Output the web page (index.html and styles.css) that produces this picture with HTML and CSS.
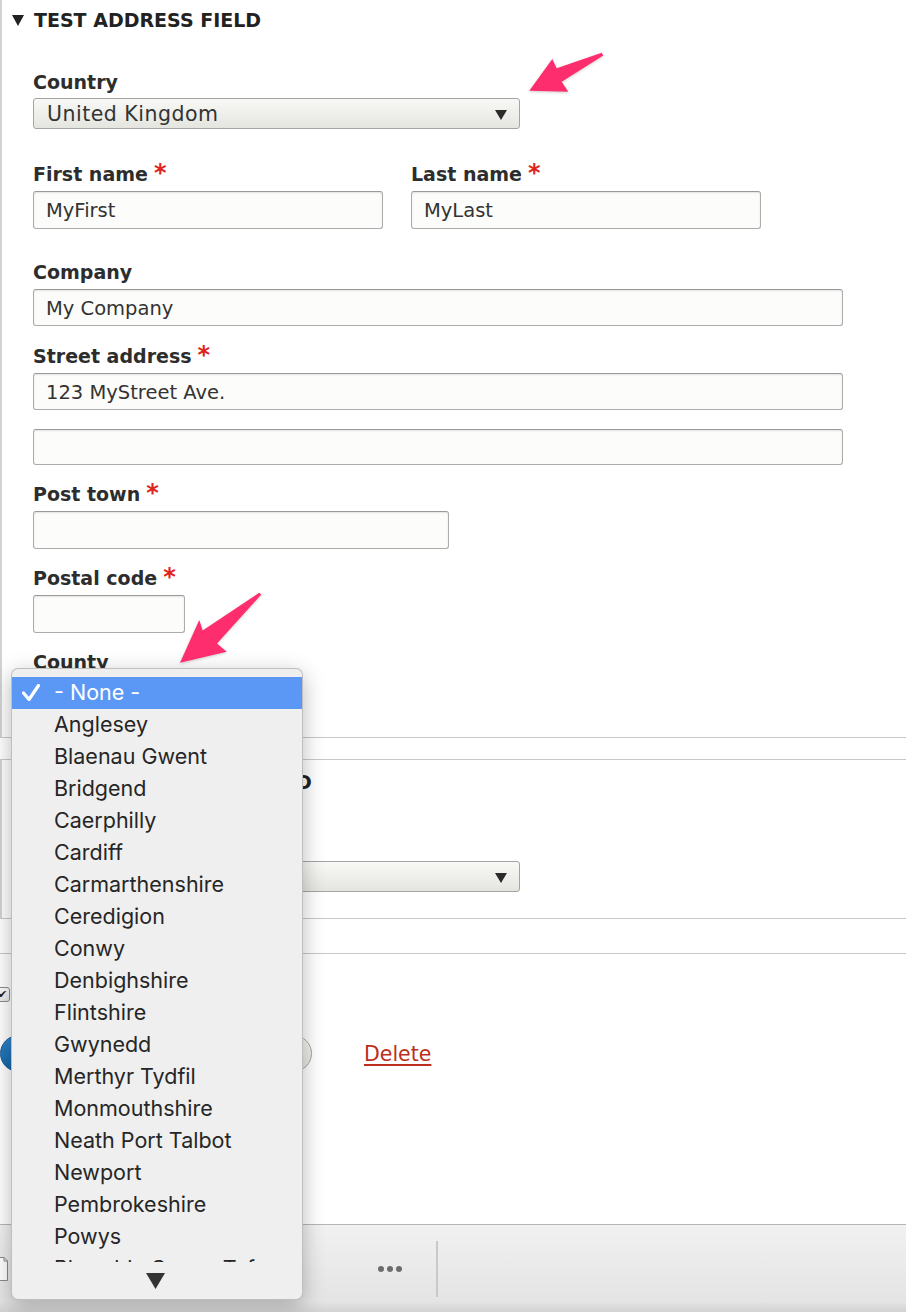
FILE: index.html
```html
<!DOCTYPE html>
<html lang="en">
<head>
<meta charset="utf-8">
<title>Test address field</title>
<link rel="stylesheet" href="styles.css">
</head>
<body>
<section class="details">
  <div class="summary">
    <svg class="summary-icon" width="12" height="11" viewBox="0 0 12 11"><polygon points="0,0 12,0 6,11" fill="#222"/></svg>
    <span>TEST ADDRESS FIELD</span>
  </div>

  <div class="field field--country">
    <div class="label">Country</div>
    <div class="select select--wide select--lift"><span>United Kingdom</span><i class="caret"></i></div>
  </div>

  <div class="row">
    <div class="field field--inrow">
      <div class="label">First name<span class="req">*</span></div>
      <input class="text w-name" type="text" value="MyFirst">
    </div>
    <div class="field field--inrow">
      <div class="label">Last name<span class="req">*</span></div>
      <input class="text w-name" type="text" value="MyLast">
    </div>
  </div>

  <div class="field field--company">
    <div class="label">Company</div>
    <input class="text text--short w-full" type="text" value="My Company">
  </div>

  <div class="field field--street">
    <div class="label">Street address<span class="req">*</span></div>
    <input class="text text--short w-full" type="text" value="123 MyStreet Ave.">
    <input class="text text--line2 w-full" type="text" value="">
  </div>

  <div class="field">
    <div class="label">Post town<span class="req">*</span></div>
    <input class="text w-town" type="text" value="">
  </div>

  <div class="field">
    <div class="label">Postal code<span class="req">*</span></div>
    <input class="text w-postal" type="text" value="">
  </div>

  <div class="field">
    <div class="label">County</div>
    <div class="select select--county"><span>- None -</span><i class="caret"></i></div>
  </div>
</section>

<section class="details details--second">
  <div class="summary">
    <svg class="summary-icon" width="12" height="11" viewBox="0 0 12 11"><polygon points="0,0 12,0 6,11" fill="#222"/></svg>
    <span>ANOTHER ADDRESS FIELD</span>
  </div>
  <div class="field field--country2">
    <div class="label">Country</div>
    <div class="select select--wide"><span>- None -</span><i class="caret"></i></div>
  </div>
</section>

<div class="meta">
  <div class="check-row"><span class="checkbox">✔</span><span class="check-label">Published</span></div>
  <div class="actions">
    <span class="btn btn--primary">Save</span>
    <span class="btn btn--secondary">Preview</span>
    <a class="delete" href="#">Delete</a>
  </div>
</div>

<footer class="footer">
  <svg class="doc" width="13" height="26" viewBox="0 0 13 26"><path d="M1.5 1.5 H8 L11.5 5 V24.5 H1.5 Z" fill="#fff" stroke="#8a8a8a" stroke-width="1"/><path d="M8 1.5 V5 H11.5" fill="none" stroke="#8a8a8a" stroke-width="1"/></svg>
  <div class="dots"><i></i><i></i><i></i></div>
  <div class="divider"></div>
</footer>

<div class="popup">
  <ul class="popup-list">
    <li class="is-selected"><svg class="check" width="18" height="17" viewBox="0 0 18 17"><path d="M1.5 9 L7 15.5 L16.5 1.5" fill="none" stroke="#fff" stroke-width="3.2" stroke-linecap="round" stroke-linejoin="round"/></svg>- None -</li>
    <li>Anglesey</li>
    <li>Blaenau Gwent</li>
    <li>Bridgend</li>
    <li>Caerphilly</li>
    <li>Cardiff</li>
    <li>Carmarthenshire</li>
    <li>Ceredigion</li>
    <li>Conwy</li>
    <li>Denbighshire</li>
    <li>Flintshire</li>
    <li>Gwynedd</li>
    <li>Merthyr Tydfil</li>
    <li>Monmouthshire</li>
    <li>Neath Port Talbot</li>
    <li>Newport</li>
    <li>Pembrokeshire</li>
    <li>Powys</li>
    <li>Rhondda Cynon Taf</li>
    <li>Swansea</li>
  </ul>
  <div class="popup-scroll">
    <svg width="19" height="16" viewBox="0 0 19 16"><polygon points="0,0 19,0 9.5,16" fill="#333"/></svg>
  </div>
</div>

<svg class="annotations" width="906" height="1312" viewBox="0 0 906 1312">
  <polygon points="529.3,90.7 552.3,59 556.7,68.3 601.7,52.7 603.3,55.5 561.7,81.7 568.3,91.7" fill="#fe2d6e"/>
  <polygon points="180,662.7 199.3,620 202.7,630.5 259.3,592.7 261.3,594.5 217,643.5 226.7,651.7" fill="#fe2d6e"/>
</svg>
</body>
</html>
```

FILE: styles.css
```css
* {
  box-sizing: border-box;
}

html,
body {
  margin: 0;
  padding: 0;
}

body {
  width: 906px;
  height: 1312px;
  overflow: hidden;
  position: relative;
  background: #fff;
  font-family: "DejaVu Sans", sans-serif;
  color: #333;
  display: flex;
  flex-direction: column;
}

/* ---------- details / fieldsets ---------- */
.details {
  border-left: 2px solid #d2d2d2;
  border-bottom: 1px solid #c8c8c8;
  padding: 0 0 27px 31px;
}

.details--second {
  border-top: 1px solid #c8c8c8;
  margin-top: 21px;
  padding-bottom: 26px;
}

.summary {
  height: 40px;
  margin-left: -21px;
  display: flex;
  align-items: center;
  gap: 10px;
  font-weight: bold;
  font-size: 19px;
  color: #222;
}

.details--second .summary {
  height: 44px;
}

.summary-icon {
  flex: none;
}

/* ---------- fields ---------- */
.field {
  margin-top: 18px;
}

.field--country {
  margin-top: 31px;
}

.field--country2 {
  margin-top: 29px;
}

.field--inrow {
  margin-top: 0;
}

.field--company {
  margin-top: 32px;
}

.field--street {
  margin-top: 19px;
}

.row {
  display: flex;
  gap: 28px;
  margin-top: 34px;
}

.label {
  display: flex;
  align-items: flex-start;
  height: 22px;
  font: bold 19px/22px "DejaVu Sans", sans-serif;
  color: #2d2d2d;
  margin-bottom: 6px;
}

.req {
  color: #e0231b;
  font-size: 24px;
  line-height: 20px;
  margin-left: 6px;
  margin-top: 0;
  font-weight: bold;
}

.text {
  display: block;
  height: 38px;
  margin: 0;
  border: 1px solid #ababab;
  border-top-color: #9a9a9a;
  border-radius: 3px;
  background: #fcfcfa;
  box-shadow: inset 0 1px 2px rgba(0, 0, 0, 0.1);
  padding: 1px 12px 0;
  font: 19.5px "DejaVu Sans", sans-serif;
  color: #333;
  outline: none;
}

.text--short {
  height: 37px;
}

.text--line2 {
  height: 36px;
  margin-top: 19px;
}

.w-name {
  width: 350px;
}

.w-full {
  width: 810px;
}

.w-town {
  width: 416px;
}

.w-postal {
  width: 152px;
}

.select {
  display: flex;
  align-items: center;
  justify-content: space-between;
  height: 31px;
  border: 1px solid #a4a4a4;
  border-radius: 3px;
  background: linear-gradient(#f8f8f6, #e5e5e0);
  padding: 2px 12px 0 13px;
  font: 20.5px/1 "DejaVu Sans", sans-serif;
  letter-spacing: 0.5px;
  color: #333;
}

.select--lift {
  margin-top: -1px;
}

.select--wide {
  width: 487px;
}

.select--county {
  width: 250px;
}

.caret {
  width: 0;
  height: 0;
  border-left: 6.5px solid transparent;
  border-right: 6.5px solid transparent;
  border-top: 10px solid #2b2b2b;
  margin-top: 0;
}

/* ---------- meta + actions ---------- */
.meta {
  border-top: 1px solid #c8c8c8;
  margin-top: 34px;
  padding-top: 33px;
}

.check-row {
  display: flex;
  align-items: center;
  gap: 10px;
  height: 15px;
}

.checkbox {
  width: 15px;
  height: 15px;
  margin-left: -5px;
  border: 1px solid #8d8d8d;
  border-radius: 3px;
  background: linear-gradient(#fdfdfd, #e8e8e8);
  font-size: 11px;
  line-height: 13px;
  text-align: center;
  color: #222;
}

.check-label {
  font-size: 19px;
}

.actions {
  display: flex;
  align-items: center;
  margin-top: 33px;
}

.btn {
  height: 37px;
  border-radius: 20px;
  display: flex;
  align-items: center;
  justify-content: center;
  font-size: 19px;
}

.btn--primary {
  width: 130px;
  margin-left: 0;
  border: 1px solid #1b5b92;
  background: linear-gradient(#2f86cc, #1463a6);
  color: #fff;
}

.btn--secondary {
  width: 162px;
  margin-left: 20px;
  border: 1px solid #a3a3a3;
  background: linear-gradient(#f7f6f2, #e6e5de);
  color: #333;
}

.delete {
  margin-left: 52px;
  font-size: 20.5px;
  color: #bc2f1c;
  text-decoration: underline;
  text-underline-offset: 3px;
}

/* ---------- footer bar ---------- */
.footer {
  margin-top: auto;
  height: 88px;
  flex: none;
  border-top: 1px solid #b5b5b5;
  background: linear-gradient(#f1f1f1, #e4e4e4 88%, #d2d2d2);
  display: flex;
  align-items: center;
}

.doc {
  margin-left: -4px;
  flex: none;
}

.dots {
  margin-left: 369px;
  display: flex;
  gap: 3px;
}

.dots i {
  width: 6px;
  height: 6px;
  border-radius: 50%;
  background: #6c6c6c;
}

.divider {
  width: 2px;
  height: 56px;
  background: #c9c9c9;
  margin-left: 34px;
}

/* ---------- native-like popup menu ---------- */
.popup {
  position: absolute;
  left: 11px;
  top: 668px;
  width: 292px;
  height: 632px;
  background: #efefef;
  border: 1px solid rgba(0, 0, 0, 0.2);
  border-radius: 7px;
  box-shadow: 0 6px 22px rgba(0, 0, 0, 0.28);
  padding-top: 8px;
  z-index: 5;
  font-family: Inter, "Liberation Sans", sans-serif;
}

.popup-list {
  list-style: none;
  margin: 0;
  padding: 0;
  height: 585px;
  overflow: hidden;
}

.popup-list li {
  position: relative;
  height: 32px;
  line-height: 30px;
  padding-left: 42px;
  padding-bottom: 2px;
  font-size: 21.5px;
  color: #262626;
  white-space: nowrap;
}

.popup-list li.is-selected {
  background: #5b98f5;
  color: #fff;
}

.check {
  position: absolute;
  left: 10px;
  top: 7px;
}

.popup-scroll {
  height: 37px;
  display: flex;
  align-items: center;
  justify-content: center;
  padding-right: 3px;
}

/* ---------- annotation arrows ---------- */
.annotations {
  position: absolute;
  left: 0;
  top: 0;
  z-index: 10;
  pointer-events: none;
  filter: drop-shadow(0 1px 1.5px rgba(0, 0, 0, 0.2));
}
```
